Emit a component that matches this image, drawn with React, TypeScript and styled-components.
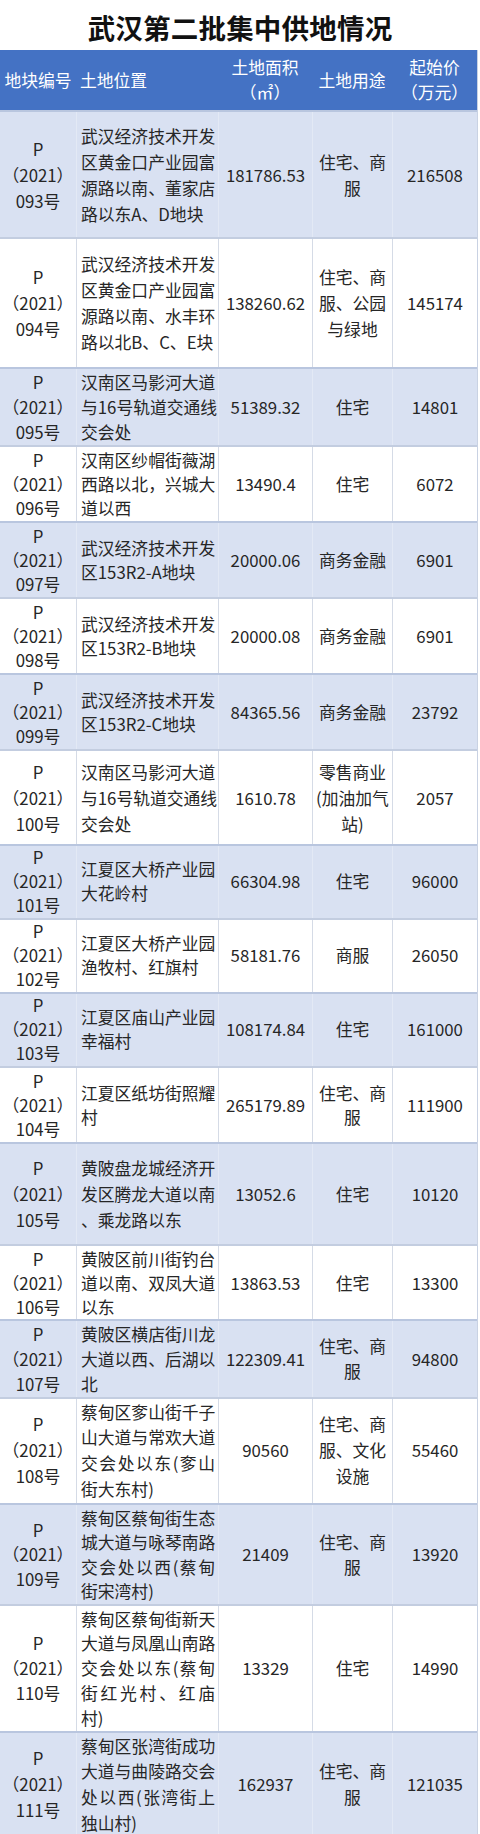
import React from "react";
import styled, { createGlobalStyle } from "styled-components";

const Global = createGlobalStyle`
  html, body { margin: 0; padding: 0; background: #ffffff; }
  body { font-family: "Noto Sans CJK SC", "Noto Sans", sans-serif; color: #262626; }
`;

const COLS = "76px 142px 94px 80px 85px";

const Page = styled.div`
  width: 480px;
  height: 1834px;
  overflow: hidden;
  background: #ffffff;
`;

const Title = styled.h1`
  margin: 0;
  height: 50px;
  padding-top: 3px;
  box-sizing: border-box;
  display: flex;
  align-items: center;
  justify-content: center;
  font-size: 27.5px;
  font-weight: 700;
  color: #111111;
  letter-spacing: 0.2px;
`;

const Table = styled.div`
  width: 477px;
  border-right: 1px solid #c9d2e3;
  box-sizing: content-box;
`;

const HeaderRow = styled.div`
  display: grid;
  grid-template-columns: ${COLS};
  height: 60px;
  background: #4472c4;
  color: #ffffff;
`;

const HeadCell = styled.div<{ $align?: "left" | "center" }>`
  display: flex;
  flex-direction: column;
  justify-content: center;
  align-items: ${(p) => (p.$align === "left" ? "flex-start" : "center")};
  padding-left: ${(p) => (p.$align === "left" ? "4px" : "0")};
  font-size: 16.8px;
  line-height: 25px;
  text-align: center;
  white-space: nowrap;
`;

const Row = styled.div<{ $alt: boolean; $h: number; $lh: number }>`
  display: grid;
  grid-template-columns: ${COLS};
  height: ${(p) => p.$h}px;
  box-sizing: border-box;
  background: ${(p) => (p.$alt ? "#d9e1f2" : "#ffffff")};
  border-top: 2px solid ${(p) => (p.$alt ? "#b9c6df" : "#c3cde0")};
  --vline: ${(p) => (p.$alt ? "#e3e9f5" : "#d5dbe6")};
  --lh: ${(p) => p.$lh}px;
`;

const Cell = styled.div`
  display: flex;
  flex-direction: column;
  justify-content: center;
  align-items: center;
  text-align: center;
  font-size: 16.8px;
  line-height: var(--lh);
  color: #262626;
  white-space: nowrap;
  & + & {
    border-left: 1px solid var(--vline);
  }
`;

const LocCell = styled(Cell)`
  align-items: stretch;
  padding: 0 3px 0 4px;
`;

const LocLine = styled.span<{ $justify: boolean }>`
  display: block;
  text-align: ${(p) => (p.$justify ? "justify" : "left")};
  text-align-last: ${(p) => (p.$justify ? "justify" : "left")};
`;

const Line = styled.span`
  display: block;
`;

type Plot = {
  no: string;
  loc: string[];
  area: string;
  use: string[];
  price: string;
  h: number;
};

const plots: Plot[] = [
  { no: "093", loc: ["武汉经济技术开发", "区黄金口产业园富", "源路以南、董家店", "路以东A、D地块"], area: "181786.53", use: ["住宅、商", "服"], price: "216508", h: 127 },
  { no: "094", loc: ["武汉经济技术开发", "区黄金口产业园富", "源路以南、水丰环", "路以北B、C、E块"], area: "138260.62", use: ["住宅、商", "服、公园", "与绿地"], price: "145174", h: 130 },
  { no: "095", loc: ["汉南区马影河大道", "与16号轨道交通线", "交会处"], area: "51389.32", use: ["住宅"], price: "14801", h: 78 },
  { no: "096", loc: ["汉南区纱帽街薇湖", "西路以北，兴城大", "道以西"], area: "13490.4", use: ["住宅"], price: "6072", h: 76 },
  { no: "097", loc: ["武汉经济技术开发", "区153R2-A地块"], area: "20000.06", use: ["商务金融"], price: "6901", h: 76 },
  { no: "098", loc: ["武汉经济技术开发", "区153R2-B地块"], area: "20000.08", use: ["商务金融"], price: "6901", h: 76 },
  { no: "099", loc: ["武汉经济技术开发", "区153R2-C地块"], area: "84365.56", use: ["商务金融"], price: "23792", h: 76 },
  { no: "100", loc: ["汉南区马影河大道", "与16号轨道交通线", "交会处"], area: "1610.78", use: ["零售商业", "(加油加气", "站)"], price: "2057", h: 95 },
  { no: "101", loc: ["江夏区大桥产业园", "大花岭村"], area: "66304.98", use: ["住宅"], price: "96000", h: 74 },
  { no: "102", loc: ["江夏区大桥产业园", "渔牧村、红旗村"], area: "58181.76", use: ["商服"], price: "26050", h: 74 },
  { no: "103", loc: ["江夏区庙山产业园", "幸福村"], area: "108174.84", use: ["住宅"], price: "161000", h: 74 },
  { no: "104", loc: ["江夏区纸坊街照耀", "村"], area: "265179.89", use: ["住宅、商", "服"], price: "111900", h: 76 },
  { no: "105", loc: ["黄陂盘龙城经济开", "发区腾龙大道以南", "、乘龙路以东"], area: "13052.6", use: ["住宅"], price: "10120", h: 102 },
  { no: "106", loc: ["黄陂区前川街钓台", "道以南、双凤大道", "以东"], area: "13863.53", use: ["住宅"], price: "13300", h: 75 },
  { no: "107", loc: ["黄陂区横店街川龙", "大道以西、后湖以", "北"], area: "122309.41", use: ["住宅、商", "服"], price: "94800", h: 78 },
  { no: "108", loc: ["蔡甸区奓山街千子", "山大道与常欢大道", "交会处以东(奓山", "街大东村)"], area: "90560", use: ["住宅、商", "服、文化", "设施"], price: "55460", h: 106 },
  { no: "109", loc: ["蔡甸区蔡甸街生态", "城大道与咏琴南路", "交会处以西(蔡甸", "街宋湾村)"], area: "21409", use: ["住宅、商", "服"], price: "13920", h: 101 },
  { no: "110", loc: ["蔡甸区蔡甸街新天", "大道与凤凰山南路", "交会处以东(蔡甸", "街红光村、红庙", "村)"], area: "13329", use: ["住宅"], price: "14990", h: 127 },
  { no: "111", loc: ["蔡甸区张湾街成功", "大道与曲陵路交会", "处以西(张湾街上", "独山村)"], area: "162937", use: ["住宅、商", "服"], price: "121035", h: 106 },
];

const lineHeightFor = (p: Plot) => {
  const lines = Math.max(3, p.loc.length, p.use.length);
  return Math.min(26, (p.h - 3) / lines);
};

export default function App() {
  return (
    <Page>
      <Global />
      <Title>武汉第二批集中供地情况</Title>
      <Table>
        <HeaderRow>
          <HeadCell>地块编号</HeadCell>
          <HeadCell $align="left">土地位置</HeadCell>
          <HeadCell>
            <Line>土地面积</Line>
            <Line>（㎡）</Line>
          </HeadCell>
          <HeadCell>土地用途</HeadCell>
          <HeadCell>
            <Line>起始价</Line>
            <Line>（万元）</Line>
          </HeadCell>
        </HeaderRow>
        {plots.map((p, i) => (
          <Row key={p.no} $alt={i % 2 === 0} $h={p.h} $lh={lineHeightFor(p)}>
            <Cell>
              <Line>P</Line>
              <Line>（2021）</Line>
              <Line>{p.no}号</Line>
            </Cell>
            <LocCell>
              {p.loc.map((l, j) => (
                <LocLine key={j} $justify={j < p.loc.length - 1}>
                  {l}
                </LocLine>
              ))}
            </LocCell>
            <Cell>{p.area}</Cell>
            <Cell>
              {p.use.map((u, j) => (
                <Line key={j}>{u}</Line>
              ))}
            </Cell>
            <Cell>{p.price}</Cell>
          </Row>
        ))}
      </Table>
    </Page>
  );
}
